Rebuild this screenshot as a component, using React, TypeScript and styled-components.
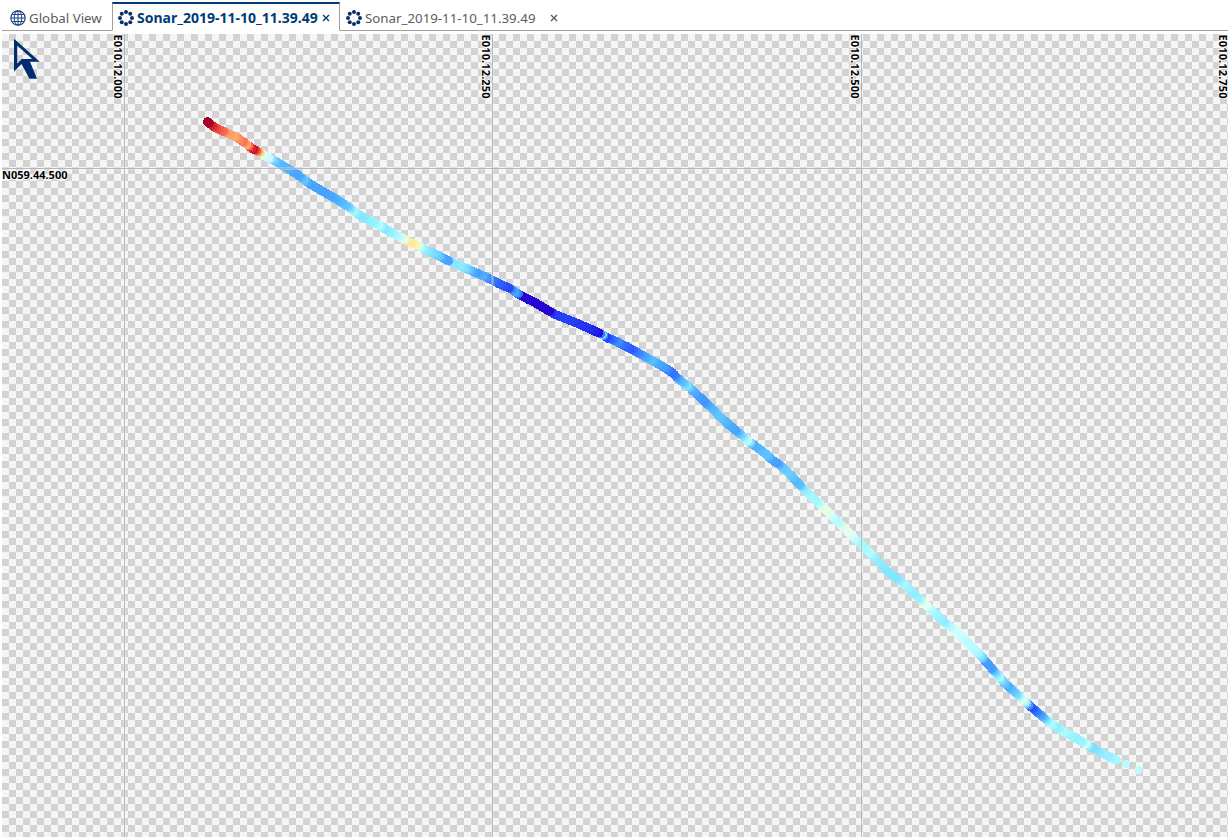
import React from 'react';
import styled, {createGlobalStyle, css} from 'styled-components';

const GlobalStyle = createGlobalStyle`
    body {
        margin: 0;
        background: #fff;
        overflow: hidden;
    }
`;

const Workspace = styled.div`
    display: flex;
    flex-direction: column;
    box-sizing: border-box;
    width: 100vw;
    height: 100vh;
    padding: 2px 0 0 2px;
    font-family: 'Noto Sans', 'Open Sans', sans-serif;
`;

const TabBar = styled.div`
    display: flex;
    flex: none;
    height: 29px;
    margin-bottom: 3px;
`;

const Tab = styled.div<{$active?: boolean; $width: number}>`
    display: flex;
    align-items: center;
    box-sizing: border-box;
    flex: none;
    width: ${(props) => props.$width}px;
    padding: 3px 0 0 6px;
    color: #5c5c5c;
    font-size: 13.3px;
    white-space: nowrap;
    border-bottom: 1px solid #a0a0a0;
    ${(props) =>
        props.$active &&
        css`
            padding: 1px 0 0 5px;
            color: #003c78;
            font-size: 14px;
            font-weight: 700;
            border-top: 2px solid #003c78;
            border-left: 1px solid #a0a0a0;
            border-right: 1px solid #a0a0a0;
            border-bottom-color: transparent;
        `}
`;

const TabLabel = styled.span<{$width: number}>`
    width: ${(props) => props.$width}px;
    margin-left: 3px;
    line-height: 20px;
`;

const CloseButton = styled.button<{$gap: number}>`
    display: flex;
    margin: 0 0 0 ${(props) => props.$gap}px;
    padding: 0;
    color: inherit;
    background: transparent;
    border: none;
`;

const TabBarRest = styled.div`
    flex: 1;
    border-bottom: 1px solid #a0a0a0;
`;

const MapView = styled.div`
    flex: 1;
    min-height: 0;
    background: repeating-conic-gradient(#d3d3d3 0 25%, #f5f5f5 0 50%) 0 0 / 14px 14px;
`;

const MapCanvas = styled.svg`
    display: block;
    width: 1226px;
    height: 803px;
`;

const GlobeSvg = styled.svg`
    margin-left: 2px;
`;

const AxisLabel = styled.text`
    fill: #000;
    stroke: rgba(255, 255, 255, 0.75);
    stroke-width: 2px;
    stroke-linejoin: round;
    paint-order: stroke;
    font-size: 11px;
    font-weight: 700;
`;

type Sample = [number, number, string];

// x, y and depth colour of the soundings, in view coordinates
const samples: Sample[] = [
    [207.5, 121.8, '#a50026'], [210.7, 124.5, '#b30022'], [215, 127.7, '#dc2a2c'], [221.7, 130.7, '#f05a4c'],
    [226, 132.5, '#f4704f'], [230, 134.3, '#fc9a66'], [236.7, 137.3, '#fdae6a'], [241, 140.4, '#fc8a5e'],
    [245.3, 143, '#fa7058'], [250, 147, '#fdae6a'], [253.5, 149.2, '#e8303a'], [256.7, 150.7, '#c81020'],
    [259.3, 152, '#ec6a4c'], [261.7, 153.5, '#fed080'], [264, 155, '#e8ffe8'], [266.7, 156.7, '#d0fcff'],
    [271.5, 159, '#ccfbff'], [276.7, 162, '#70d0ff'], [281.7, 165, '#58b8ff'], [290, 170, '#52b4ff'],
    [296.7, 174, '#48a4ff'], [301.7, 178, '#4aa8ff'], [306.7, 181.7, '#64c8ff'], [311.7, 185, '#48a4ff'],
    [323.3, 191.7, '#489fff'], [333.3, 197.3, '#48a8ff'], [341.7, 202.7, '#54b8ff'], [350, 208, '#64c8ff'],
    [355.7, 212.5, '#a8f8ff'], [361.7, 216.7, '#84e6ff'], [370, 220.7, '#8ceeff'], [376.7, 224.3, '#98f4ff'],
    [381.7, 226.7, '#b8fcff'], [386.7, 230, '#88e8ff'], [395, 234.3, '#9cf4ff'], [401.7, 237.7, '#c0fcff'],
    [406.7, 241, '#e8ffe0'], [410, 242.7, '#fee8a4'], [414, 244, '#feeaa0'], [418.3, 245.5, '#fff4b8'],
    [421.7, 247.3, '#d0fff4'], [426.7, 250.5, '#94f0ff'], [435, 254, '#7adcff'], [441.7, 257.3, '#64c8ff'],
    [446.7, 260, '#48a0ff'], [451.7, 262, '#48a4ff'], [454, 263.3, '#84e4ff'], [461.7, 266.7, '#90ecff'],
    [468.3, 269.3, '#7cdcff'], [473.3, 271.7, '#5cbcff'], [478.3, 273.7, '#409cff'], [485, 276.7, '#54b0ff'],
    [491.7, 280, '#3c84ff'], [498.3, 283.3, '#3068ff'], [506.7, 287, '#2850f8'], [511.7, 289.5, '#2844f8'],
    [515, 292, '#4090ff'], [518.3, 294, '#48a8ff'], [521.7, 296, '#3070f8'], [523.5, 297, '#2408d0'],
    [533.3, 301.7, '#2408d8'], [543.3, 307.7, '#2404d0'], [552, 312.7, '#2404cc'], [555, 314.3, '#2838f8'],
    [566.7, 319, '#2444f8'], [580, 324.5, '#2438f4'], [590, 329, '#2430f0'], [602.3, 334.5, '#2010e0'],
    [605.3, 336.7, '#70d8ff'], [608.3, 338.3, '#2440ff'], [613.3, 340, '#2c64ff'], [620, 343.3, '#3c90ff'],
    [626.7, 346.7, '#3068ff'], [633.3, 350, '#2c58ff'], [640, 354, '#3c80ff'], [646.7, 357.7, '#48a4ff'],
    [653.3, 361, '#5cc0ff'], [660, 365, '#48a8ff'], [666.7, 369, '#449cff'], [672.7, 373, '#3474ff'],
    [676.7, 377.3, '#3878ff'], [680.7, 380.7, '#50b0ff'], [685, 384, '#60c4ff'], [690, 387.7, '#80e0ff'],
    [694, 391.7, '#58b0ff'], [700, 397.3, '#409cff'], [706.7, 403.7, '#4098ff'], [711.7, 408, '#54b4ff'],
    [720, 416.7, '#60c8ff'], [730, 425.7, '#4cb0ff'], [738.3, 432.5, '#48a4ff'], [744, 437.3, '#78d8ff'],
    [747.5, 440.5, '#b0fcff'], [751, 443.2, '#b0fcff'], [755.7, 446.3, '#50acff'], [765, 453.3, '#5cc0ff'],
    [769.3, 457.3, '#60c4ff'], [773.3, 460.7, '#48a4ff'], [780, 464.9, '#489cff'], [783.3, 468, '#64c8ff'],
    [790, 474.3, '#6cd0ff'], [796.7, 481.7, '#58b8ff'], [801.7, 486.7, '#5cc0ff'], [805, 490.5, '#8cecff'],
    [810, 495, '#a4f6ff'], [818.3, 502.7, '#a0f8ff'], [823.3, 507.3, '#d8fff0'], [826.7, 510.7, '#e8ffd8'],
    [831.7, 516, '#d8fff8'], [838.3, 522.3, '#acfcff'], [845, 528.7, '#e0ffe8'], [850, 533.7, '#e8fff0'],
    [856, 539.7, '#c4fcff'], [861.7, 544.7, '#a0f4ff'], [871.7, 554.7, '#b4fcff'], [876.7, 560, '#98ecff'],
    [886.7, 570.3, '#84e6ff'], [891.7, 575, '#84e6ff'], [898.3, 579.3, '#80e4ff'], [905, 585, '#a8f8ff'],
    [915, 594.7, '#90ecff'], [921.7, 600.7, '#a0f4ff'], [925.7, 604.7, '#e4ffec'], [929, 608, '#d8fffc'],
    [935, 613.3, '#a8f8ff'], [945, 622.7, '#90ecff'], [953.3, 629, '#c0fcff'], [958, 633, '#d0ffff'],
    [968, 642.7, '#b8fcff'], [975, 650.3, '#b8fcff'], [980, 655, '#a0f4ff'], [983.3, 658.7, '#7cdcff'],
    [986.7, 662.7, '#449cff'], [994, 671, '#489cff'], [997.7, 675.3, '#78dcff'], [1001, 679.3, '#b8fcff'],
    [1005, 683.7, '#70d0ff'], [1010, 688, '#50acff'], [1016.7, 694, '#68ccff'], [1020.7, 697.7, '#90e8ff'],
    [1022.3, 699.3, '#b0fcff'], [1025.7, 702, '#e0ffe8'], [1028.3, 704.7, '#a0f0ff'], [1031.3, 707, '#4890ff'],
    [1033.5, 709, '#2450ff'], [1039, 713.7, '#3480ff'], [1045, 718.5, '#54b0ff'], [1049.3, 722.3, '#8ce8ff'],
    [1052.7, 724.7, '#b4fcff'], [1058.3, 728, '#90ecff'], [1065, 732.5, '#acfcff'], [1076.7, 738.7, '#94f0ff'],
    [1085, 743.3, '#a0f4ff'], [1088, 745.3, '#d8fff4'], [1090.7, 746.7, '#98f0ff'], [1094, 748.7, '#7cdcff'],
    [1103.3, 753.7, '#94ecff'], [1111.7, 757.7, '#98f0ff'], [1116.3, 760, '#a4f8ff'],
];

const strays: Sample[] = [
    [1126, 764, '#b8fcff'],
    [1138.5, 770.3, '#b8fcff'],
];

const channel = (color: string, i: number) => parseInt(color.slice(1 + i * 2, 3 + i * 2), 16);

const mix = (a: string, b: string, t: number) =>
    `rgb(${[0, 1, 2].map((i) => Math.round(channel(a, i) * (1 - t) + channel(b, i) * t)).join(',')})`;

// fill the gaps between soundings so the dots overlap
const getTrack = (points: Sample[]): Sample[] => {
    const track: Sample[] = [];
    points.slice(0, -1).forEach(([x, y, color], i) => {
        const [nx, ny, nextColor] = points[i + 1];
        const steps = Math.max(1, Math.round(Math.hypot(nx - x, ny - y) / 1.8));
        for (let s = 0; s < steps; s++) {
            const t = s / steps;
            track.push([x + (nx - x) * t, y + (ny - y) * t, mix(color, nextColor, t)]);
        }
    });
    track.push(points[points.length - 1]);
    // only the leading edge of a covered dot stays visible, so the colour is taken two dots ahead
    return track
        .map(([x, y], i): Sample => [x, y, track[i < 2 ? i : Math.min(i + 2, track.length - 1)][2]])
        .reverse();
};

const meridians = [
    {x: 124, label: 'E010.12.000'},
    {x: 492, label: 'E010.12.250'},
    {x: 861, label: 'E010.12.500'},
    {x: 1229, label: 'E010.12.750'},
];

const GlobeIcon = () => (
    <GlobeSvg width="16" height="16" viewBox="0 0 17 17" fill="none" stroke="#0f3c7c" strokeWidth="1">
        <circle cx="8.5" cy="8.5" r="7.6" strokeWidth="1.2" />
        <ellipse cx="8.5" cy="8.5" rx="4" ry="7.6" />
        <path d="M8.5 1v15M1 8.5h15M2.3 4.8h12.4M2.3 12.2h12.4" />
    </GlobeSvg>
);

const SonarIcon = () => (
    <svg width="16" height="16" viewBox="0 0 16 16" fill="#0a2f70">
        {[0, 1, 2, 3, 4, 5, 6, 7].map((i) => (
            <circle
                key={i}
                cx={8 + 6 * Math.cos((i * Math.PI) / 4)}
                cy={8 + 6 * Math.sin((i * Math.PI) / 4)}
                r="2"
            />
        ))}
    </svg>
);

const CloseIcon = () => (
    <svg width="8" height="8" viewBox="0 0 8 8" stroke="currentColor" strokeWidth="1.4">
        <path d="M1 1l6 6M7 1L1 7" />
    </svg>
);

export default function App() {
    return (
        <>
            <GlobalStyle />
            <Workspace>
                <TabBar>
                    <Tab $width={110}>
                        <GlobeIcon />
                        <TabLabel $width={74}>Global View</TabLabel>
                    </Tab>
                    <Tab $active $width={228}>
                        <SonarIcon />
                        <TabLabel $width={181}>Sonar_2019-11-10_11.39.49</TabLabel>
                        <CloseButton $gap={4} aria-label="Close">
                            <CloseIcon />
                        </CloseButton>
                    </Tab>
                    <Tab $width={229}>
                        <SonarIcon />
                        <TabLabel $width={171}>Sonar_2019-11-10_11.39.49</TabLabel>
                        <CloseButton $gap={14} aria-label="Close">
                            <CloseIcon />
                        </CloseButton>
                    </Tab>
                    <TabBarRest />
                </TabBar>
                <MapView>
                    <MapCanvas viewBox="2 34 1226 803">
                        <g shapeRendering="crispEdges">
                            {getTrack(samples).map(([x, y, color], i) => (
                                <circle key={i} cx={x} cy={y} r="4.6" fill={color} />
                            ))}
                            {strays.map(([x, y, color]) => (
                                <circle key={x} cx={x} cy={y} r="4" fill={color} />
                            ))}
                        </g>
                        {meridians.map(({x, label}) => (
                            <g key={label}>
                                <rect x={x - 1} y="34" width="3" height="803" fill="#fff" fillOpacity="0.25" />
                                <rect x={x} y="34" width="1" height="803" fill="#aaa" fillOpacity="0.8" />
                                <AxisLabel transform={`translate(${x - 10} 34.5) rotate(90)`} textLength="64">
                                    {label}
                                </AxisLabel>
                            </g>
                        ))}
                        <rect x="2" y="167" width="1226" height="3" fill="#fff" fillOpacity="0.25" />
                        <rect x="2" y="168" width="1226" height="1" fill="#aaa" fillOpacity="0.8" />
                        <AxisLabel x="2" y="179">
                            N059.44.500
                        </AxisLabel>
                        <path
                            d="M14 38.8L39.8 61.7H30L37 78.8H29.5L21.5 64L14 71.5ZM17.2 45.5V63.5L22 59H32.3Z"
                            fill="#002d72"
                            fillRule="evenodd"
                        />
                    </MapCanvas>
                </MapView>
            </Workspace>
        </>
    );
}
